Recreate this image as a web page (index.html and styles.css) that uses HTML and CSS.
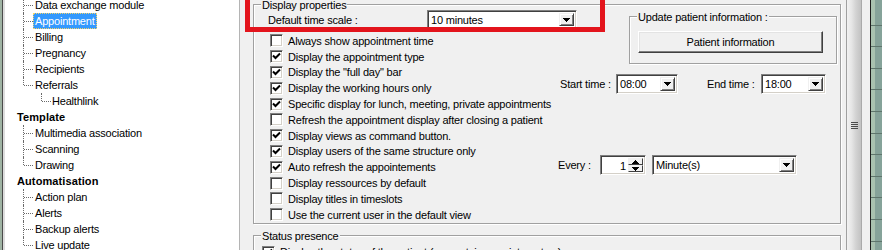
FILE: index.html
```html
<!DOCTYPE html>
<html lang="en">
<head>
    <meta charset="UTF-8">
    <title>Appointment settings</title>
    <link rel="stylesheet" href="styles.css">
</head>
<body>
    <div class="window">
        <div class="frame-left"></div>

        <!-- navigation tree -->
        <div class="tree">
            <ul class="tree-root">
                <li>
                    <ul class="children">
                        <li><span class="label">Data exchange module</span></li>
                        <li><span class="label selected">Appointment</span></li>
                        <li><span class="label">Billing</span></li>
                        <li><span class="label">Pregnancy</span></li>
                        <li><span class="label">Recipients</span></li>
                        <li><span class="label">Referrals</span>
                            <ul class="children">
                                <li><span class="label">Healthlink</span></li>
                            </ul>
                        </li>
                    </ul>
                </li>
                <li><span class="label heading">Template</span>
                    <ul class="children">
                        <li><span class="label">Multimedia association</span></li>
                        <li><span class="label">Scanning</span></li>
                        <li><span class="label">Drawing</span></li>
                    </ul>
                </li>
                <li><span class="label heading">Automatisation</span>
                    <ul class="children">
                        <li><span class="label">Action plan</span></li>
                        <li><span class="label">Alerts</span></li>
                        <li><span class="label">Backup alerts</span></li>
                        <li><span class="label">Live update</span></li>
                    </ul>
                </li>
            </ul>
        </div>

        <!-- settings panel -->
        <div class="panel">
            <div class="group group-display">
                <span class="legend">Display properties</span>
                <div class="display-grid">
                    <div class="row-default">
                        <span class="scale-label">Default time scale :</span>
                        <div class="combo combo-scale">
                            <span class="combo-text">10 minutes</span>
                            <span class="combo-btn"><svg width="7" height="4" viewBox="0 0 7 4"><polygon points="0,0 7,0 3.5,4" fill="#000" shape-rendering="crispEdges"/></svg></span>
                        </div>
                    </div>

                    <div class="group update-group">
                        <span class="legend">Update patient information :</span>
                        <button type="button" class="btn">Patient information</button>
                    </div>

                    <label class="check"><span class="cb"></span>Always show appointment time</label>
                    <label class="check"><span class="cb"><svg width="9" height="9" viewBox="0 0 9 9"><polyline points="1,3.5 3.5,6 8,1.5" fill="none" stroke="#000" stroke-width="2"/></svg></span>Display the appointment type</label>
                    <label class="check"><span class="cb"><svg width="9" height="9" viewBox="0 0 9 9"><polyline points="1,3.5 3.5,6 8,1.5" fill="none" stroke="#000" stroke-width="2"/></svg></span>Display the "full day" bar</label>
                    <label class="check"><span class="cb"><svg width="9" height="9" viewBox="0 0 9 9"><polyline points="1,3.5 3.5,6 8,1.5" fill="none" stroke="#000" stroke-width="2"/></svg></span>Display the working hours only</label>
                    <label class="check"><span class="cb"><svg width="9" height="9" viewBox="0 0 9 9"><polyline points="1,3.5 3.5,6 8,1.5" fill="none" stroke="#000" stroke-width="2"/></svg></span>Specific display for lunch, meeting, private appointments</label>
                    <label class="check"><span class="cb"></span>Refresh the appointment display after closing a patient</label>
                    <label class="check"><span class="cb"><svg width="9" height="9" viewBox="0 0 9 9"><polyline points="1,3.5 3.5,6 8,1.5" fill="none" stroke="#000" stroke-width="2"/></svg></span>Display views as command button.</label>
                    <label class="check"><span class="cb"><svg width="9" height="9" viewBox="0 0 9 9"><polyline points="1,3.5 3.5,6 8,1.5" fill="none" stroke="#000" stroke-width="2"/></svg></span>Display users of the same structure only</label>
                    <label class="check"><span class="cb"><svg width="9" height="9" viewBox="0 0 9 9"><polyline points="1,3.5 3.5,6 8,1.5" fill="none" stroke="#000" stroke-width="2"/></svg></span>Auto refresh the appointements</label>
                    <label class="check"><span class="cb"></span>Display ressources by default</label>
                    <label class="check"><span class="cb"></span>Display titles in timeslots</label>
                    <label class="check"><span class="cb"></span>Use the current user in the default view</label>

                    <div class="time-range">
                        <span class="start-label">Start time :</span>
                        <div class="combo combo-start">
                            <span class="combo-text">08:00</span>
                            <span class="combo-btn"><svg width="7" height="4" viewBox="0 0 7 4"><polygon points="0,0 7,0 3.5,4" fill="#000" shape-rendering="crispEdges"/></svg></span>
                        </div>
                        <span class="end-label">End time :</span>
                        <div class="combo combo-end">
                            <span class="combo-text">18:00</span>
                            <span class="combo-btn"><svg width="7" height="4" viewBox="0 0 7 4"><polygon points="0,0 7,0 3.5,4" fill="#000" shape-rendering="crispEdges"/></svg></span>
                        </div>
                    </div>

                    <div class="refresh-every">
                        <span class="every-label">Every :</span>
                        <div class="spin">
                            <span class="spin-value">1</span>
                            <span class="spin-btns">
                                <span class="spin-btn"><svg width="7" height="4" viewBox="0 0 7 4"><polygon points="0,4 7,4 3.5,0" fill="#000" shape-rendering="crispEdges"/></svg></span>
                                <span class="spin-btn"><svg width="7" height="4" viewBox="0 0 7 4"><polygon points="0,0 7,0 3.5,4" fill="#000" shape-rendering="crispEdges"/></svg></span>
                            </span>
                        </div>
                        <div class="combo combo-unit">
                            <span class="combo-text">Minute(s)</span>
                            <span class="combo-btn"><svg width="7" height="4" viewBox="0 0 7 4"><polygon points="0,0 7,0 3.5,4" fill="#000" shape-rendering="crispEdges"/></svg></span>
                        </div>
                    </div>
                </div>
            </div>

            <div class="group group-status">
                <span class="legend">Status presence</span>
                <label class="check"><span class="cb"><svg width="9" height="9" viewBox="0 0 9 9"><polyline points="1,3.5 3.5,6 8,1.5" fill="none" stroke="#000" stroke-width="2"/></svg></span>Display the status of the patient (present, in appointment, ...)</label>
            </div>
        </div>

        <div class="scrollbar"><div class="scroll-thumb"><span class="grip"></span></div></div>
        <div class="frame-right"></div>
    </div>

    <!-- red highlight drawn over the screenshot -->
    <div class="highlight-box"></div>
</body>
</html>
```

FILE: styles.css
```css
body {
    margin: 0;
    width: 882px;
    height: 250px;
    overflow: hidden;
    position: relative;
    font-family: "Liberation Sans", Arial, sans-serif;
    font-size: 11px;
    letter-spacing: -0.2px;
    color: #000;
    background-color: #f0f0f0;
}

.window {
    display: flex;
    height: 250px;
}

.frame-left {
    flex: none;
    width: 5px;
    background: linear-gradient(to right, #9fb3a3 0 2px, #4a4a4a 2px 3px, #dcdcdc 3px 5px);
}

/* tree */

.tree {
    flex: none;
    width: 234px;
    background-color: #fff;
    border-right: 1px solid #b4b4b4;
    overflow: hidden;
}

.tree-root {
    list-style: none;
    margin: -3px 0 0;
    padding: 0 0 0 10px;
}

.tree-root li {
    line-height: 14px;
    white-space: nowrap;
}

.label {
    display: inline-block;
    height: 14px;
    padding: 0 1px;
    border: 1px solid transparent;
}

.label.heading {
    font-weight: bold;
    letter-spacing: 0.1px;
}

.label.selected {
    background-color: #3399ff;
    color: #fff;
    border: 1px dotted #f2d36b;
}

.children {
    list-style: none;
    margin: 0 0 0 8px;
    padding: 0;
}

.children > li {
    position: relative;
    padding-left: 10px;
}

.children .children > li {
    padding-left: 9px;
}

.children > li::before {
    content: "";
    position: absolute;
    left: 0;
    top: 0;
    bottom: 0;
    border-left: 1px dotted #6a6a6a;
}

.children > li:last-child::before {
    bottom: auto;
    height: 8px;
}

.children > li::after {
    content: "";
    position: absolute;
    left: 1px;
    top: 8px;
    width: 9px;
    border-top: 1px dotted #6a6a6a;
}

/* panel */

.panel {
    flex: none;
    width: 606px;
    box-sizing: border-box;
    padding: 4px 5px 0 13px;
}

.group {
    position: relative;
    border: 1px solid #a0a0a0;
    box-shadow: inset 1px 1px #fff, 1px 1px #fff;
}

.legend {
    position: absolute;
    top: -6px;
    left: 7px;
    padding: 0 1px;
    line-height: 13px;
    background-color: #f0f0f0;
    white-space: nowrap;
}

.group-display {
    padding: 5px 3px 0 14px;
}

.display-grid {
    display: grid;
    grid-template-columns: minmax(0, 1fr) 281px;
    grid-template-rows: 23px repeat(12, 15.8px);
}

.row-default {
    grid-column: 1;
    display: flex;
    align-items: flex-start;
    min-width: 0;
}

.scale-label {
    flex: none;
    width: 159px;
    line-height: 19px;
    padding-top: 1px;
}

.check {
    grid-column: 1;
    display: flex;
    align-items: center;
    min-width: 0;
    margin-left: 2px;
    white-space: nowrap;
}

.cb {
    flex: none;
    display: flex;
    align-items: center;
    justify-content: center;
    width: 13px;
    height: 13px;
    box-sizing: border-box;
    margin-right: 5px;
    background-color: #fff;
    border: 1px solid;
    border-color: #808080 #fff #fff #808080;
    box-shadow: inset 1px 1px #404040, inset -1px -1px #d4d0c8;
}

/* combo boxes */

.combo {
    flex: none;
    display: flex;
    box-sizing: border-box;
    height: 19px;
    padding: 2px;
    background-color: #fff;
    border: 1px solid;
    border-color: #808080 #fff #fff #808080;
    box-shadow: inset 1px 1px #404040, inset -1px -1px #d4d0c8;
}

.combo-text {
    flex: 1;
    padding-left: 1px;
    line-height: 15px;
    overflow: hidden;
}

.combo-btn {
    flex: none;
    display: flex;
    align-items: center;
    justify-content: center;
    width: 15px;
    box-sizing: border-box;
    background-color: #f0f0f0;
    border: 1px solid;
    border-color: #f0f0f0 #404040 #404040 #f0f0f0;
    box-shadow: inset 1px 1px #fff, inset -1px -1px #808080;
}

.combo-scale {
    width: 150px;
}

/* update patient group */

.update-group {
    grid-column: 2;
    grid-row: 1 / span 3;
    justify-self: end;
    align-self: start;
    width: 208px;
    height: 48px;
    margin-top: 6px;
    box-sizing: border-box;
    padding: 14px 0 0 8px;
}

.btn {
    display: block;
    width: 185px;
    height: 22px;
    padding: 0;
    font-family: inherit;
    font-size: 11px;
    letter-spacing: -0.2px;
    color: #000;
    background-color: #f0f0f0;
    border: 1px solid;
    border-color: #fff #404040 #404040 #fff;
    box-shadow: inset -1px -1px #808080, inset 1px 1px #e3e3e3;
}

/* start / end time */

.time-range {
    grid-column: 2;
    grid-row: 5;
    align-self: start;
    display: flex;
    align-items: center;
    margin-top: -6px;
    padding-left: 4px;
}

.start-label {
    flex: none;
    width: 56px;
}

.end-label {
    flex: none;
    width: 54px;
    margin-left: 29px;
}

.combo-start,
.combo-end {
    height: 20px;
}

.combo-start {
    width: 62px;
}

.combo-end {
    width: 65px;
}

/* auto refresh */

.refresh-every {
    grid-column: 2;
    grid-row: 10;
    align-self: start;
    display: flex;
    align-items: center;
    margin-top: -4px;
    padding-left: 2px;
}

.every-label {
    flex: none;
    width: 42px;
}

.spin {
    flex: none;
    display: flex;
    box-sizing: border-box;
    width: 46px;
    height: 20px;
    padding: 2px;
    background-color: #fff;
    border: 1px solid;
    border-color: #808080 #fff #fff #808080;
    box-shadow: inset 1px 1px #404040, inset -1px -1px #d4d0c8;
}

.spin-value {
    flex: 1;
    text-align: right;
    line-height: 16px;
    padding-right: 2px;
}

.spin-btns {
    display: flex;
    flex-direction: column;
    width: 15px;
}

.spin-btn {
    flex: 1;
    display: flex;
    align-items: center;
    justify-content: center;
    box-sizing: border-box;
    background-color: #f0f0f0;
    border: 1px solid;
    border-color: #f0f0f0 #404040 #404040 #f0f0f0;
}

.combo-unit {
    width: 145px;
    height: 20px;
    margin-left: 6px;
}

/* status presence */

.group-status {
    margin-top: 11px;
    height: 40px;
    padding: 10px 0 0 8px;
}

.group-status .check {
    margin-left: 0;
}

/* scrollbar and right frame */

.scrollbar {
    flex: none;
    width: 24px;
    box-sizing: border-box;
    border-left: 1px solid #a0a0a0;
    padding-right: 8px;
}

.scroll-thumb {
    height: 100%;
    display: flex;
    align-items: center;
    justify-content: center;
    background: linear-gradient(to right, #f2f2f2 0, #e6e6e6 30%, #d2d2d2 60%, #c4c4c4 90%, #9c9c9c 100%);
}

.grip {
    width: 7px;
    height: 7px;
    background: repeating-linear-gradient(to bottom, #4c4c4c 0 1px, transparent 1px 2px);
}

.frame-right {
    flex: none;
    width: 12px;
    box-sizing: border-box;
    border-left: 1px solid #1c1c1c;
    background:
        repeating-linear-gradient(to bottom, transparent 0 20.6px, #5f766d 20.6px 21.6px) 0 4px,
        linear-gradient(to right, #a9c2b0 0 4px, #86a39a 4px);
}

/* annotation */

.highlight-box {
    position: absolute;
    left: 245px;
    top: -10px;
    width: 360px;
    height: 42px;
    box-sizing: border-box;
    border: 5px solid #e3141c;
}
```
